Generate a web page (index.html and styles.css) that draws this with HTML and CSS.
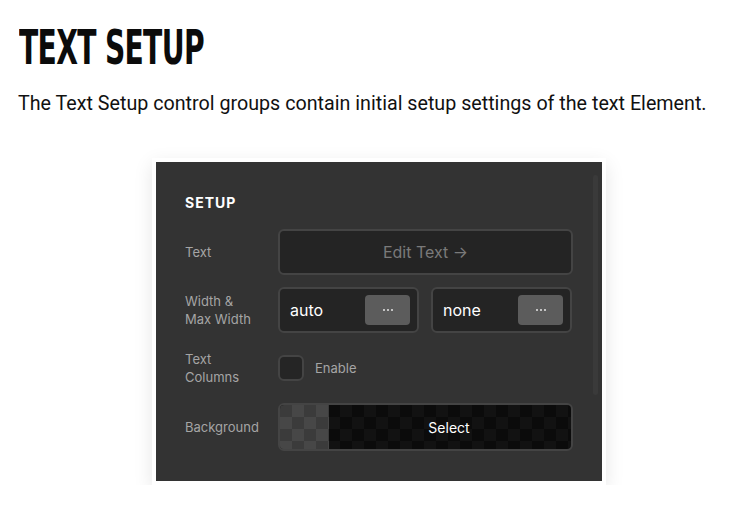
FILE: index.html
```html
<!DOCTYPE html>
<html lang="en">
<head>
    <meta charset="UTF-8">
    <meta name="viewport" content="width=device-width, initial-scale=1.0">
    <title>Text Setup</title>
    <link rel="stylesheet" href="styles.css">
</head>
<body>

    <!-- Intro -->
    <h1 class="page-title"><span>TEXT SETUP</span></h1>
    <p class="page-intro">The Text Setup control groups contain initial setup settings of the text Element.</p>

    <!-- Screenshot of the panel -->
    <div class="shot">
        <div class="panel">
            <div class="panel-title">SETUP</div>

            <div class="row">
                <div class="label">Text</div>
                <div class="field field-wide edit-text">Edit Text &rarr;</div>
            </div>

            <div class="row">
                <div class="label">Width &amp;<br>Max Width</div>
                <div class="pair">
                    <div class="field field-unit">
                        <span>auto</span>
                        <span class="dots"><i></i><i></i><i></i></span>
                    </div>
                    <div class="field field-unit">
                        <span>none</span>
                        <span class="dots"><i></i><i></i><i></i></span>
                    </div>
                </div>
            </div>

            <div class="row">
                <div class="label">Text<br>Columns</div>
                <div class="check">
                    <span class="box"></span>
                    <span class="check-text">Enable</span>
                </div>
            </div>

            <div class="row row-last">
                <div class="label">Background</div>
                <div class="field field-wide bg-select">
                    <span class="swatch"></span>
                    <span class="select">Select</span>
                </div>
            </div>

            <div class="scrollbar"></div>
        </div>
    </div>

</body>
</html>
```

FILE: styles.css
```css
/* General */
body {
    margin: 0;
    padding: 0;
    background-color: #fff;
    color: #111;
    font-family: 'Inter', 'Roboto', sans-serif;
}

/* Title and intro */
.page-title {
    margin: 0;
    padding: 22px 0 0 19px;
    height: 50px;
    font-family: 'DejaVu Sans Condensed', 'DejaVu Sans', sans-serif;
    font-weight: bold;
    font-size: 48px;
    line-height: 50px;
    color: #0b0b0b;
}

.page-title span {
    display: inline-block;
    transform: scaleX(0.652);
    transform-origin: left center;
    letter-spacing: -1px;
}

.page-intro {
    margin: 20px 0 0 18px;
    font-family: 'Roboto', sans-serif;
    font-size: 19.7px;
    line-height: 24px;
    color: #111;
}

/* Panel screenshot */
.shot {
    width: 446px;
    margin: 42px 0 0 152px;
    padding: 4px;
    background-color: #fff;
    box-shadow: 0 6px 18px rgba(0, 0, 0, 0.10);
}

.panel {
    position: relative;
    background-color: #333;
    padding: 32px 29px 30px 29px;
    font-family: 'Inter', 'Roboto', sans-serif;
}

.panel-title {
    font-size: 14px;
    font-weight: bold;
    letter-spacing: 1px;
    color: #fff;
    margin-bottom: 18px;
    line-height: 17px;
}

.row {
    display: flex;
    align-items: center;
    height: 46px;
    margin-bottom: 12px;
}

.row-last {
    height: 48px;
    margin-bottom: 0;
}

.label {
    width: 93px;
    font-size: 13px;
    line-height: 18px;
    color: #a5a5a5;
}

.field {
    box-sizing: border-box;
    height: 46px;
    background-color: #242424;
    border: 2px solid #444;
    border-radius: 6px;
    display: flex;
    align-items: center;
}

.field-wide {
    width: 295px;
}

.edit-text {
    justify-content: center;
    font-size: 16px;
    color: #7a7a7a;
}

.pair {
    display: flex;
    gap: 12px;
}

.field-unit {
    width: 141px;
    justify-content: space-between;
    padding: 0 7px 0 10px;
    font-size: 16px;
    color: #fff;
}

.dots {
    width: 45px;
    height: 30px;
    background-color: #5c5c5c;
    border-radius: 4px;
    display: flex;
    align-items: center;
    justify-content: center;
    gap: 2px;
}

.dots i {
    width: 2px;
    height: 2px;
    border-radius: 1px;
    background-color: #e6e6e6;
}

.check {
    display: flex;
    align-items: center;
}

.box {
    box-sizing: border-box;
    width: 26px;
    height: 26px;
    background-color: #252525;
    border: 2px solid #444;
    border-radius: 6px;
    margin-right: 11px;
}

.check-text {
    font-size: 13px;
    color: #a5a5a5;
}

/* Background picker with checkerboard */
.bg-select {
    height: 48px;
    overflow: hidden;
    background-color: #0b0b0b;
    background-image:
        linear-gradient(45deg, #121212 25%, transparent 25%, transparent 75%, #121212 75%),
        linear-gradient(45deg, #121212 25%, transparent 25%, transparent 75%, #121212 75%);
    background-size: 24px 24px;
    background-position: 0 0, 12px 12px;
}

.swatch {
    width: 49px;
    height: 100%;
    background-color: #3b3b3b;
    background-image:
        linear-gradient(45deg, #474747 25%, transparent 25%, transparent 75%, #474747 75%),
        linear-gradient(45deg, #474747 25%, transparent 25%, transparent 75%, #474747 75%);
    background-size: 24px 24px;
    background-position: 0 0, 12px 12px;
}

.select {
    flex: 1;
    text-align: center;
    font-size: 14px;
    color: #fff;
    padding-right: 2px;
}

.scrollbar {
    position: absolute;
    top: 13px;
    right: 4px;
    width: 5px;
    height: 220px;
    border-radius: 3px;
    background-color: #3a3a3a;
}
```
